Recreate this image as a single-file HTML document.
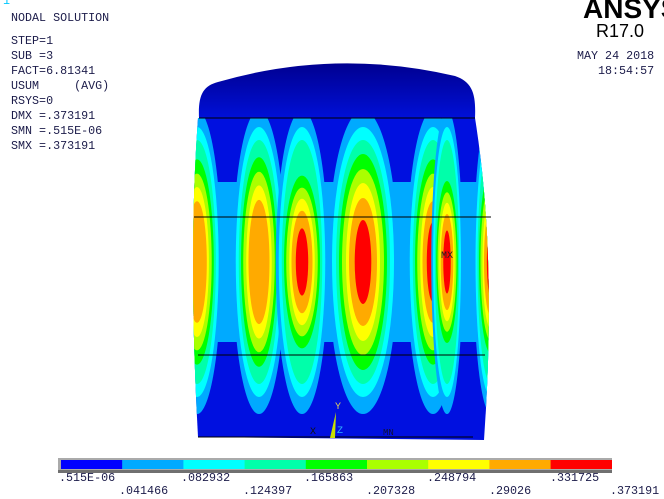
<!DOCTYPE html>
<html><head><style>
body{margin:0;width:664px;height:495px;background:#fff;overflow:hidden;position:relative;font-family:"Liberation Mono",monospace;}
.t{position:absolute;font-size:11.7px;color:#1c1c4a;white-space:pre;line-height:15px;}
</style></head><body>
<div class="t" style="left:3px;top:-6px;color:#00c8ff">1</div>
<div class="t" style="left:11px;top:11px">NODAL SOLUTION</div>
<div class="t" style="left:11px;top:34px">STEP=1
SUB =3
FACT=6.81341
USUM     (AVG)
RSYS=0
DMX =.373191
SMN =.515E-06
SMX =.373191</div>
<div style="position:absolute;left:583px;top:-7px;font:bold 28px 'Liberation Sans',sans-serif;color:#000">ANSYS</div>
<div style="position:absolute;left:596px;top:21px;font:18px 'Liberation Sans',sans-serif;color:#000">R17.0</div>
<div class="t" style="left:577px;top:49px">MAY 24 2018</div>
<div class="t" style="left:598px;top:64px">18:54:57</div>

<svg width="664" height="495" style="position:absolute;left:0;top:0">
<defs>
<clipPath id="b"><path d="M198,118 L475,118 Q497,255 484,440 L198,437 Q188,255 198,118Z"/></clipPath>
<linearGradient id="d" x1="0" y1="0" x2="0" y2="1"><stop offset="0" stop-color="#000090"/><stop offset="1" stop-color="#0010d8"/></linearGradient>
</defs>
<path d="M199,118 C198,95 203,86 218,82 Q335,48 455,76 C473,82 476,95 475,118Z" fill="url(#d)"/>
<rect x="185" y="117" width="320" height="325" fill="#0010e0" clip-path="url(#b)"/>
<g clip-path="url(#b)">
<rect x="185" y="182" width="320" height="160" fill="#00aaff"/>
<g id="cols"></g>
</g>
<g stroke="#000" stroke-width="1">
<line x1="199" y1="118" x2="475" y2="118"/>
<line x1="194" y1="217" x2="491" y2="217"/>
<line x1="198" y1="355" x2="485" y2="355"/>
<line x1="198" y1="437" x2="473" y2="437"/>
</g>
<text x="441" y="258" font-family="Liberation Mono" font-size="10" fill="#222">MX</text>
<text x="310" y="434" font-family="Liberation Mono" font-size="10" fill="#111">X</text>
<text x="383" y="435" font-family="Liberation Mono" font-size="9" fill="#113">MN</text>
<text x="335" y="409" font-family="Liberation Mono" font-size="10" fill="#ddd060">Y</text>
<text x="337" y="433" font-family="Liberation Mono" font-size="10" fill="#30b0ff">Z</text>
<path d="M330,438 L336,412 L335,438Z" fill="#c8e000"/>
<rect x="58" y="458" width="554" height="15" fill="#aaa"/>
<rect x="58" y="470" width="554" height="3" fill="#707070"/>
<g id="leg"></g>
</svg>
<div class="t" style="left:59px;top:471px">.515E-06</div>
<div class="t" style="left:119px;top:484px">.041466</div>
<div class="t" style="left:181px;top:471px">.082932</div>
<div class="t" style="left:243px;top:484px">.124397</div>
<div class="t" style="left:304px;top:471px">.165863</div>
<div class="t" style="left:366px;top:484px">.207328</div>
<div class="t" style="left:427px;top:471px">.248794</div>
<div class="t" style="left:489px;top:484px">.29026</div>
<div class="t" style="left:550px;top:471px">.331725</div>
<div class="t" style="left:610px;top:484px">.373191</div>
<script>
var C=["#00aaff","#00ffff","#00ffaa","#00ff00","#aaff00","#ffff00","#ffaa00","#ff0000"];
var ns="http://www.w3.org/2000/svg";
var leg=document.getElementById("leg");
var L=["#0000ff"].concat(C);
for(var i=0;i<9;i++){var r=document.createElementNS(ns,"rect");r.setAttribute("x",61+i*61.2);r.setAttribute("y",460);r.setAttribute("width",61.4);r.setAttribute("height",9);r.setAttribute("fill",L[i]);leg.appendChild(r);}
var cols=document.getElementById("cols");
var cs=[[197,7,0.7,0.95],[259,7,0.75,0.97],[302,8,0.75,0.8],[363,8,1.0,1],[491,8,0.5,0.85],[433,8,0.75,0.95],[447,8,0.45,0.75]];
var rx=[35,31,27,24,21,17,14,8.3],ry=[152,135,122,108,93,79,64,42];
cs.forEach(function(c){for(var k=0;k<c[1];k++){var e=document.createElementNS(ns,"ellipse");e.setAttribute("cx",c[0]);e.setAttribute("cy",262);e.setAttribute("rx",rx[k]*c[2]);e.setAttribute("ry",ry[k]*(k>=3?c[3]:1));e.setAttribute("fill",C[k]);cols.appendChild(e);}});
</script>
</body></html>
